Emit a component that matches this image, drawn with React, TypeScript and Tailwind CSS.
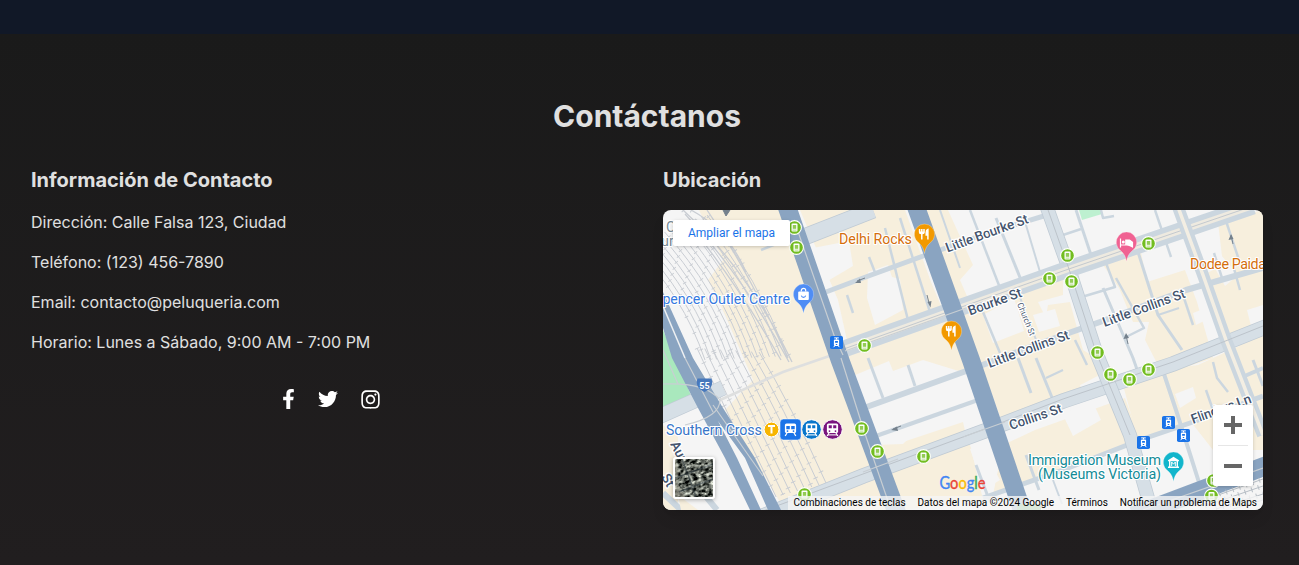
import React from "react";
import { FaFacebookF, FaTwitter, FaInstagram } from "react-icons/fa";

type P = [number, number];

const labelFont = "Roboto, sans-serif";
const blue = "#8aa4c1";
const road = "#cbd6df";
const avenue = "#d6dfe6";

const beige = [
  "36,0 120,0 185,150 235,300 100,300 118,294 62,200 90,170 62,105 45,70 60,50",
  "137,0 242,0 268,72 305,160 272,162 250,135 212,150 188,148 175,90",
  "262,0 285,0 310,55 297,70 310,100 400,68 400,85 375,92 383,108 392,135 400,150 420,180 412,195 370,200 340,215 303,112",
  "205,234 240,232 300,212 303,225 308,238 320,290 238,300",
  "340,235 372,220 462,188 478,232 400,262 330,285",
  "180,136 255,112 285,120 298,160 198,200",
  "440,55 478,42 484,72 522,60 534,92 550,148 500,165 482,130 486,112 470,112 456,78",
  "555,12 600,0 600,155 556,120 540,65 560,55",
  "460,175 500,160 535,155 600,125 600,240 550,240 528,212 475,230",
  "385,95 407,92 420,140 450,158 400,184 370,180",
];

const patches = [
  "150,38 186,31 190,56 163,72", "0,232 34,215 95,300 15,300",
  "205,62 225,55 229,67 237,69 240,100 212,115 204,88",
  "180,170 226,151 230,161 260,150 302,163 305,185 295,208 256,218 240,234 213,235",
  "307,239 336,230 340,244 326,250 337,270 321,280",
  "320,105 351,88 361,121 330,133", "400,205 428,188 438,210 410,226",
  "370,105 392,99 397,116 376,122", "530,103 543,98 547,108 533,115",
  "512,184 530,177 533,188 517,198", "488,246 524,230 541,275 500,286",
  "550,55 558,45 575,65 562,76", "584,100 600,95 600,113 588,116",
];

const streets: { p: P[]; w: number }[] = [
  { p: [[163, 82], [200, 68], [263, 45], [322, 24], [384, 5]], w: 5 },
  { p: [[198, 199], [306, 160], [400, 125], [437, 112], [523, 80], [600, 58]], w: 6 },
  { p: [[213, 226], [315, 190]], w: 4 },
  { p: [[320, 288], [400, 260], [477, 230], [527, 213], [600, 186]], w: 5 },
  { p: [[307, 0], [337, 78]], w: 2.5 }, { p: [[333, 8], [358, 70]], w: 3 },
  { p: [[360, 5], [377, 62]], w: 2 }, { p: [[277, 0], [297, 58]], w: 2 },
  { p: [[222, 18], [245, 110]], w: 2.5 }, { p: [[237, 8], [267, 102]], w: 2.5 },
  { p: [[206, 47], [213, 65]], w: 2.5 }, { p: [[184, 85], [190, 103]], w: 2.5 },
  { p: [[98, 40], [118, 32]], w: 2.5 }, { p: [[320, 102], [337, 143]], w: 2.5 },
  { p: [[355, 82], [375, 135]], w: 2 }, { p: [[413, 0], [428, 45]], w: 3 },
  { p: [[400, 25], [418, 19]], w: 2.5 }, { p: [[475, 42], [495, 105], [519, 140]], w: 3 },
  { p: [[453, 68], [481, 118], [463, 127]], w: 2.5 }, { p: [[440, 78], [470, 148], [477, 168]], w: 3 },
  { p: [[492, 0], [508, 47]], w: 2.5 }, { p: [[562, 8], [576, 50]], w: 2.5 },
  { p: [[570, 55], [577, 80]], w: 2.5 }, { p: [[551, 43], [559, 68]], w: 2.5 },
  { p: [[422, 86], [452, 77], [443, 53]], w: 2.5 }, { p: [[495, 105], [516, 98]], w: 2 },
  { p: [[520, 85], [530, 115]], w: 2.5 }, { p: [[438, 0], [440, 8], [451, 6]], w: 2.5 },
  { p: [[500, 161], [513, 200], [540, 285]], w: 4 }, { p: [[550, 152], [554, 168], [565, 182]], w: 2.5 },
  { p: [[543, 180], [550, 200]], w: 2.5 }, { p: [[577, 168], [600, 158]], w: 4 },
  { p: [[590, 150], [600, 176]], w: 3 }, { p: [[205, 148], [220, 188]], w: 3 },
  { p: [[245, 155], [252, 176]], w: 3 }, { p: [[355, 148], [368, 183]], w: 3 },
  { p: [[373, 148], [390, 190]], w: 3 }, { p: [[383, 168], [400, 160]], w: 2 },
  { p: [[313, 255], [327, 292]], w: 3 }, { p: [[363, 245], [376, 280]], w: 3 },
  { p: [[390, 270], [399, 294]], w: 2 }, { p: [[412, 130], [424, 155]], w: 2.5 },
];

const stops: P[] = [
  [131.5, 17.5], [133.5, 37.5], [201.5, 135.5], [198.5, 218.5], [214.5, 241.5], [260.5, 246.5], [141.5, 284.5],
  [404.5, 45.5], [386.5, 68.5], [408.5, 71.5], [485.5, 33.5], [434.5, 142.5], [447.5, 164.5], [466.5, 169.5], [485.5, 159.5],
  [550.5, 270.5], [548.5, 286],
];

const trams: P[] = [[173.5, 132.5], [480.5, 232.5], [505.5, 212.5], [520.5, 225.5]];

const line = (p: P[]) => "M" + p.map((q) => q.join(",")).join("L");

const rails = Array.from({ length: 15 }, (_, i) => {
  const k = i / 14;
  return `M${-30 + k * 74},${35 - k * 30} Q${20 + k * 75},${85 - k * 18} ${42 + k * 82},${150 - k * 4}`;
});

const yardRails = Array.from({ length: 9 }, (_, i) => {
  const k = i / 8;
  return `M${34 + k * 62},${138 + k * 4} Q${58 + k * 70},${190 + k * 5} ${106 + k * 57},${289 - k * 16}`;
});

function Pin({ x, y, color, children }: { x: number; y: number; color: string; children: React.ReactNode }) {
  return (
    <g transform={`translate(${x} ${y})`}>
      <path d="M0 19C-1.2 12.5-3 10.9-6 8A10.2 10.2 0 1 1 6 8C3 10.9 1.2 12.5 0 19Z" fill={color} stroke="#ffffff" strokeOpacity=".45" strokeWidth=".6" />
      {children}
    </g>
  );
}

function Cutlery() {
  return (
    <g fill="none" stroke="#fff">
      <path d="M-4.9-5.5v3.3q0 1.2 1.4 1.2h1.6q1.4 0 1.4-1.2v-3.3M-2.7-5.5v10.5" strokeWidth="1.5" />
      <path d="M-4.8-2.8h4.2v1.6h-4.2z" fill="#fff" strokeWidth=".4" />
      <path d="M3.4 5v-10q-1.7.6-1.7 3v2.5h1.7" strokeWidth="1.5" fill="#fff" />
    </g>
  );
}

function Train({ x, color, square }: { x: number; color: string; square?: boolean }) {
  return (
    <g transform={`translate(${x} 219.5)`}>
      {square
        ? <rect x="-10.5" y="-10.5" width="21" height="21" rx="3.5" fill={color} stroke="#fff" strokeWidth=".5" />
        : <circle r="9.8" fill={color} stroke="#fff" strokeWidth="1" />}
      <rect x="-5.6" y="-6" width="11.2" height="9.6" rx="1.6" fill="#fff" />
      <path d="M-3.5 3.5l-1.8 3M3.5 3.5l1.8 3" stroke="#fff" strokeWidth="1.3" />
      {!square && <path d="M-4.5 5.4h9" stroke="#fff" strokeWidth="1" />}
      <path d={square ? "M-4.2-3.5h3.5v3.3h-3.5zM.7-3.5h3.5v3.3H.7z" : "M-3.8-4.2h3.1v2.9h-3.1zM.7-4.2h3.1v2.9H.7z"} fill={color} />
      <circle cx="-3" cy="1.6" r=".9" fill={color} />
      <circle cx="3" cy="1.6" r=".9" fill={color} />
    </g>
  );
}

function StreetLabel({ x, y, r, length, children, size = 13.5 }: { x: number; y: number; r: number; length?: number; children: string; size?: number }) {
  return (
    <text transform={`translate(${x} ${y}) rotate(${r})`} textLength={length} fontSize={size} fontWeight={size > 10 ? 500 : 400}
      fill="#45556e" stroke="#fff" strokeWidth="2.5" strokeLinejoin="round" paintOrder="stroke">{children}</text>
  );
}

function PlaceLabel({ x, y, color, length, size = 14.3, children }: { x: number; y: number; color: string; length?: number; size?: number; children: string }) {
  return (
    <text x={x} y={y} fontSize={size} fill={color} stroke="#fff" strokeWidth="2.2" strokeLinejoin="round" paintOrder="stroke" textLength={length}>{children}</text>
  );
}

function StreetMap() {
  return (
    <svg className="block h-full w-full" viewBox="0 0 600 300" fontFamily={labelFont}>
      <rect width="600" height="300" fill="#f5f5f5" />
      {beige.map((p) => <polygon key={p} points={p} fill="#f7efdd" />)}
      {patches.map((p) => <polygon key={p} points={p} fill="#f5f5f5" />)}
      <path d="M0 120L30 190 0 202Z" fill="#a9e8bd" />
      <path d="M416 0h23v4l-20 6Z" fill="#bdf0d0" />
      <path d="M0 215l15 12 0 73H0Z" fill="#f7efdd" />
      <path d="M0 283l18 17M40 283l14 17" stroke={road} strokeWidth="6" />
      <path d="M15 285l20 15H18Z" fill="#f7efdd" />

      <g fill="none" stroke="#c9cdd3">
        {rails.map((d) => <path key={d} d={d} strokeWidth="1" />)}
        {rails.map((d, i) => <path key={d} d={d} strokeWidth="4" strokeDasharray="0.9 17" strokeDashoffset={i * 5} />)}
        {yardRails.map((d) => <path key={d} d={d} strokeWidth="1" />)}
        {yardRails.map((d, i) => <path key={d} d={d} strokeWidth="5" strokeDasharray="0.9 15" strokeDashoffset={i * 7} />)}
        <path d="M20 0Q85 60 129 152M28 0Q65 20 83 62M44 0Q85 60 125 148M22 4Q80 66 126 152M26 14Q72 70 118 150" strokeWidth="1.3" />
        <path d="M20 0Q85 60 129 152M28 0Q65 20 83 62" strokeWidth="5" strokeDasharray="1 14" />
      </g>
      <path d="M178 142L120 162 57 190" fill="none" stroke="#dedfdf" strokeWidth="2.5" />

      <g fill="none" stroke={road} strokeLinejoin="round">
        {streets.map((s) => <path key={line(s.p)} d={line(s.p)} strokeWidth={s.w} />)}
      </g>

      <g fill="none">
        <path d="M136 29L210 0" stroke="#bfcad4" strokeWidth="17" />
        <path d="M136 29L210 0" stroke={avenue} strokeWidth="15.5" />
        <path d="M-5 207L60 178M100 306L200 266 327 219 400 191 510 154 605 116" stroke="#bfcad4" strokeWidth="15.5" />
        <path d="M-5 207L60 178M100 306L200 266 327 219 400 191 510 154 605 116" stroke={avenue} strokeWidth="14" />
        <path d="M382-8L407 62 433 142 467 225 490 306" stroke="#bfcad4" strokeWidth="14" />
        <path d="M382-8L407 62 433 142 467 225 490 306" stroke={avenue} strokeWidth="12.5" />
        <path d="M178 140L290 100 400 61 590-4" stroke={road} strokeWidth="17" />
        <path d="M178 140L290 100 400 61 590-4" stroke="#eeeae0" strokeWidth="6" />
        <path d="M178 140L290 100 400 61 590-4" stroke="#c3c9cf" strokeWidth="1" />
        <path d="M515-3L540 65 563 130 600 225" stroke={road} strokeWidth="12" />
        <path d="M515-3L540 65 563 130 600 225" stroke="#f3eee3" strokeWidth="3.5" />
        <path d="M100 301L200 264 327 217 400 189 510 152 605 114M384-3L407 62 433 142 467 225" stroke="#bcc3ca" />
      </g>

      <path d="M0 82L30 148 60 198 92 248 118 300H105L82 248 55 211 74 248 98 300H87L62 248 35 198 9 148 0 118Z" fill={blue} />
      <g fill="none" stroke={blue}>
        <path d="M123-6L177 150 235 306" strokeWidth="18.5" />
        <path d="M252-6L308 150 361 306" strokeWidth="18" />
        <path d="M470 306L605 255" strokeWidth="19" />
      </g>
      <path d="M0 96L22 148" fill="none" stroke="#eef0f2" strokeWidth="1.5" />
      <g fill="none" stroke="#c8ced3" strokeWidth="1.2">
        <path d="M131 10L172 128 180 145M178 148L201 221 226 294M50 195L100 266M22 148L50 202M0 174Q43 172 57 190Q57 207 22 215M0 140L15 174" />
        <path d="M182 141L320 92M200 262L235 249M300 227L342 212M480 300L600 258" />
      </g>
      <g stroke="#b7bec5" strokeWidth="1" fill="none">
        <path d="M530 294L600 269M542 296L600 276M553 299L600 284M570 299L600 290" />
        <path d="M530 294L600 269M542 296L600 276M553 299L600 284" strokeWidth="5" strokeDasharray="1 6" />
      </g>
      <g fill="#75818c" stroke="#75818c">
        <path d="M192 73l5-4.5 1 4.5zM264.5 92l4-1-1 6.5zM228 220l6-3.5 1 4.5zM460.5 129l2.5-6 3 5zM565.5 30l2.5-6 2.5 5z" stroke="none" />
        <path d="M194 71l8-3M264 85l2 8M230 219l8-3M463 125l2 9M568 25l2 9M60 0l3 6 4-6" fill="#75818c" />
      </g>

      <StreetLabel x={284.5} y={42.5} r={-20} length={87}>Little Bourke St</StreetLabel>
      <StreetLabel x={307} y={105.5} r={-20} length={56}>Bourke St</StreetLabel>
      <StreetLabel x={326.5} y={158} r={-20} length={86}>Little Collins St</StreetLabel>
      <StreetLabel x={441.5} y={117} r={-20} length={87}>Little Collins St</StreetLabel>
      <StreetLabel x={348} y={220} r={-19} length={55}>Collins St</StreetLabel>
      <StreetLabel x={530} y={214} r={-20} length={63}>Flinders Ln</StreetLabel>
      <StreetLabel x={354} y={94} r={68} length={35} size={8.5}>Church St</StreetLabel>
      <StreetLabel x={7} y={234} r={63}>Aur</StreetLabel>
      <StreetLabel x={-2} y={267} r={60}>St</StreetLabel>
      <PlaceLabel x={3} y={22} color="#788994">C</PlaceLabel>
      <PlaceLabel x={-2} y={36} color="#788994">ur</PlaceLabel>

      {stops.map(([x, y]) => (
        <g key={`${x}-${y}`} transform={`translate(${x} ${y})`}>
          <circle r="6.9" fill="#72bd20" stroke="#fff" strokeWidth="1.1" />
          <rect x="-3" y="-4" width="6" height="8" rx="1" fill="#fff" />
          <rect x="-1.7" y="-2.5" width="3.4" height="3.8" fill="#93cc55" />
          <path d="M-2 2.6h4" stroke="#93cc55" strokeWidth=".7" />
        </g>
      ))}
      {trams.map(([x, y]) => (
        <g key={`${x}-${y}`} transform={`translate(${x} ${y})`}>
          <rect x="-6.5" y="-6.5" width="13" height="13" rx="1.8" fill="#1a73e8" />
          <path d="M-2.3-4.6h4.6M0-4.5v1.5M-1.5 3.2l-1.5 1.5M1.5 3.2l1.5 1.5" stroke="#fff" strokeWidth="1" />
          <rect x="-2.6" y="-3" width="5.2" height="6.4" rx="1" fill="#fff" />
          <path d="M-1.4-1.6h2.8v1.8h-2.8zM-.7 1.4h1.4v1h-1.4z" fill="#1a73e8" />
        </g>
      ))}

      <Pin x={261.5} y={24.5} color="#f29900"><Cutlery /></Pin>
      <Pin x={288.5} y={121.5} color="#f29900"><Cutlery /></Pin>
      <Pin x={463.5} y={32.5} color="#f06292">
        <path d="M-6-4v9M-6 2.5h12M6 5V-.2L3-2.5h-3.7V2" stroke="#fff" strokeWidth="1.2" fill="#fff" />
        <circle cx="-3.2" cy="-.5" r="1.5" fill="#fff" />
      </Pin>
      <Pin x={140.5} y={84.5} color="#4f8df5">
        <rect x="-5.3" y="-3" width="10.6" height="8.6" rx="1" fill="#fff" />
        <path d="M-2.2-3v-1a2.2 2.2 0 0 1 4.4 0v1" fill="none" stroke="#fff" strokeWidth="1.2" />
        <path d="M-2.2 1.2a2.3 2.3 0 0 0 4.4 0" fill="none" stroke="#4f8df5" strokeWidth="1.1" />
      </Pin>
      <Pin x={510.5} y={252.5} color="#12b5cb">
        <path d="M-5.5-2.3L0-5.8 5.5-2.3v1h-11zM-5.5 4h11v1.4h-11zM-4.5-1.5h1.4V4h-1.4zM3.1-1.5h1.4V4H3.1z" fill="#fff" />
        <path d="M-1.8 3.5V-.5L0 1.7 1.8-.5v4" stroke="#fff" strokeWidth="1" fill="none" />
      </Pin>

      <PlaceLabel x={176} y={34} color="#d56e0c" length={73}>Delhi Rocks</PlaceLabel>
      <PlaceLabel x={527} y={59} color="#d56e0c" length={76}>Dodee Paida</PlaceLabel>
      <PlaceLabel x={-0.5} y={94} color="#3579df" length={127.5}>pencer Outlet Centre</PlaceLabel>
      <PlaceLabel x={3} y={225} color="#3876c8" length={96}>Southern Cross</PlaceLabel>
      <PlaceLabel x={365} y={255} color="#138b97" length={133}>Immigration Museum</PlaceLabel>
      <PlaceLabel x={375} y={269} color="#138b97" length={123}>(Museums Victoria)</PlaceLabel>

      <g transform="translate(41.5 175)">
        <path d="M-7-6.5h14l.8 3c0 5-2.5 8-7.8 10.5C-5.3 4.5-7.8 1.500-7.800-3.500Z" fill="#4778bc" />
        <text y="3.5" fill="#fff" fontSize="9" fontWeight="700" textAnchor="middle">55</text>
      </g>
      <circle cx="108.5" cy="219.5" r="7.4" fill="#f7b500" stroke="#fff" />
      <path d="M105-2.5h7M108.5-2v7" transform="translate(0 218.5)" stroke="#fff" strokeWidth="2" />
      <Train x={127.5} color="#1a73e8" square />
      <Train x={148.5} color="#0876ca" />
      <Train x={169.5} color="#79147d" />
      <rect x="354" y="294" width="24" height="10" rx="2" fill="#75b779" />
    </svg>
  );
}

function SatelliteThumb() {
  return (
    <svg className="block h-full w-full" viewBox="0 0 38 38">
      <defs>
        <filter id="aerial" x="0" y="0" width="100%" height="100%" colorInterpolationFilters="sRGB">
          <feTurbulence type="fractalNoise" baseFrequency=".22 .36" numOctaves="4" seed="8" />
          <feColorMatrix values="2 0 0 0 -.6  2 0 0 0 -.58  1.9 0 0 0 -.56  0 0 0 0 1" />
        </filter>
      </defs>
      <g transform="rotate(-20 19 19)"><rect x="-10" y="-10" width="58" height="58" filter="url(#aerial)" /></g>
      <path d="M0 0L4 12 2 23 10 38H0Z" fill="#a9a89a" opacity=".5" />
      <path d="M7 0l8 21 6 17M0 19l38-14M4 33l34-13" stroke="#263239" strokeWidth="1.5" opacity=".5" fill="none" />
    </svg>
  );
}

function MapFrame() {
  return (
    <div className="relative h-[300px] w-[600px] overflow-hidden rounded-lg shadow-lg">
      <StreetMap />
      <a className="absolute left-[10px] top-[10px] flex h-[26px] w-[117px] items-center justify-center rounded-[2px] bg-white font-[Roboto,sans-serif] text-[12px] text-[#1a73e8] shadow-[0_1px_4px_-1px_rgba(0,0,0,0.3)]">
        Ampliar el mapa
      </a>
      <div className="absolute left-[10px] top-[247px] size-[42px] overflow-hidden rounded-[3px] border-2 border-white shadow-[0_1px_4px_rgba(0,0,0,0.3)]">
        <SatelliteThumb />
      </div>
      <svg className="absolute left-[276px] top-[262px] h-[24px] w-[50px]" viewBox="0 0 50 24">
        <text x="0.5" y="16.5" fontFamily="Lato, sans-serif" fontSize="17" fontWeight="400" textLength="46" lengthAdjust="spacingAndGlyphs" strokeWidth=".35">
          <tspan fill="#4285f4" stroke="#4285f4">G</tspan><tspan fill="#ea4335" stroke="#ea4335">o</tspan><tspan fill="#fbbc04" stroke="#fbbc04">o</tspan><tspan fill="#4285f4" stroke="#4285f4">g</tspan><tspan fill="#34a853" stroke="#34a853">l</tspan><tspan fill="#ea4335" stroke="#ea4335">e</tspan>
        </text>
      </svg>
      <div className="absolute left-[550px] top-[195px] flex h-[81px] w-[40px] flex-col rounded-[2px] bg-white shadow-[0_1px_4px_-1px_rgba(0,0,0,0.3)]">
        <button aria-label="Acercar" className="flex h-[40px] items-center justify-center">
          <svg width="18" height="18" viewBox="0 0 18 18"><path d="M7 0h4v7h7v4h-7v7H7v-7H0V7h7Z" fill="#666" /></svg>
        </button>
        <div className="mx-[5px] h-px bg-[#e6e6e6]" />
        <button aria-label="Alejar" className="flex h-[40px] items-center justify-center">
          <svg width="18" height="18" viewBox="0 0 18 18"><path d="M0 7h18v4H0Z" fill="#666" /></svg>
        </button>
      </div>
      <div className="absolute bottom-0 right-0 flex h-[14px] w-[475px] items-start justify-end gap-[12px] whitespace-nowrap bg-[#f5f5f5]/80 pt-px pr-[6px] font-[Roboto,sans-serif] text-[10px] leading-3 text-black">
        <span>Combinaciones de teclas</span>
        <span>Datos del mapa ©2024 Google</span>
        <span>Términos</span>
        <span>Notificar un problema de Maps</span>
      </div>
    </div>
  );
}

export default function App() {
  return (
    <div className="h-[565px] overflow-hidden bg-[#111827] pt-[34px] font-[Inter,sans-serif] text-[#e0e0e0]">
      <section className="h-[531px] bg-linear-to-b from-[#1a1a1a] to-[#211e1f] pl-[31px] pr-9 pt-16">
        <h2 className="mb-8 text-center text-3xl font-bold leading-9">Contáctanos</h2>
        <div className="grid grid-cols-[600px_600px] gap-8">
          <div>
            <h3 className="mb-4 text-xl font-bold leading-7">Información de Contacto</h3>
            <div className="flex flex-col gap-4 text-base">
              <p>Dirección: Calle Falsa 123, Ciudad</p>
              <p>Teléfono: (123) 456-7890</p>
              <p>Email: contacto@peluqueria.com</p>
              <p>Horario: Lunes a Sábado, 9:00 AM - 7:00 PM</p>
            </div>
            <div className="mt-[35px] flex justify-center gap-[23px] text-white">
              <FaFacebookF className="h-5 w-[13px]" />
              <FaTwitter className="h-5 w-5" />
              <FaInstagram className="h-[21px] w-[19px] overflow-visible" />
            </div>
          </div>
          <div>
            <h3 className="mb-4 text-xl font-bold leading-7">Ubicación</h3>
            <MapFrame />
          </div>
        </div>
      </section>
    </div>
  );
}
